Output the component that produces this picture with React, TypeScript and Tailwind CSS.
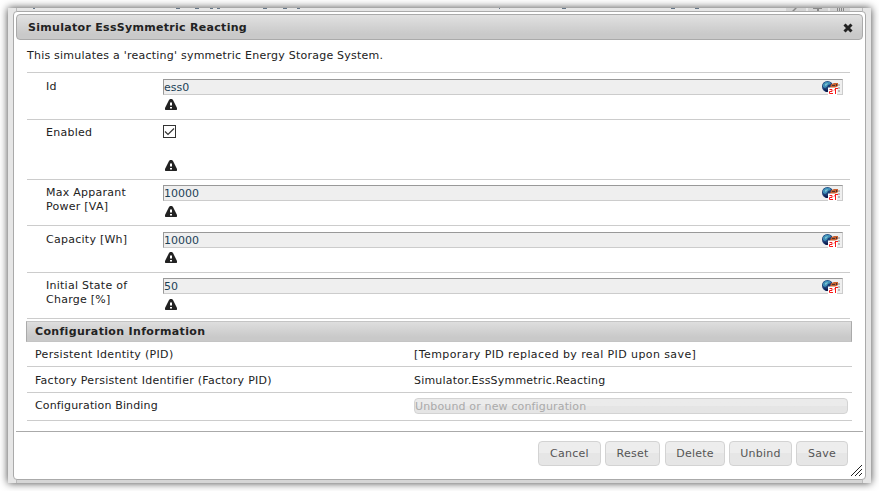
import React from "react";

function Warning() {
  return (
    <svg className="ml-[2px] block shrink-0" width="12" height="11" viewBox="0 0 12 11">
      <path d="M5 0h2l1 1 4 8v1.500l-.5 .5h-11L0 10.500V9l4-8z" fill="#222" />
      <path d="M5 3.500h2v3H5zM5 8h2v1.500H5z" fill="#fff" />
    </svg>
  );
}

function LocaleIcon() {
  return (
    <svg className="block shrink-0" width="19" height="14" viewBox="0 0 19 14">
      <circle cx="5.500" cy="5.500" r="5.500" fill="#1d3e75" />
      <path d="M1 3l3-2.500 4 .5 1 2-3 1-1 2-2 1-2-1z" fill="#3f8fb8" />
      <path d="M3 3l3-1-1 2-2 1z" fill="#7cc2d0" />
      <path d="M2 8l3 1 3-2 2 2-2 2H4z" fill="#101b4d" />
      <path d="M9 3.500l3-1.500h4v3l-3 2H8z" fill="#c8602f" />
      <path d="M10 4h3v1h-3zM14 3h1v2h-1z" fill="#4b3432" />
      <path d="M6 6.500h9v7.500H6z" fill="#fff" />
      <path d="M7.500 8.500h2.500v2h-2.500v2h3.500M12 9.500l1.500-1.500v5M13 7.500h3" fill="none" stroke="#f81818" strokeWidth="1" />
      <path d="M16 3h2v2h-2zM16 6h2v2h-2zM16 9h2v2h-2z" fill="#bbb" />
    </svg>
  );
}

function Field({ value }: { value: string }) {
  return (
    <div className="flex h-[16px] w-[680px] items-start justify-between border border-t-[#999] border-l-[#999] border-r-[#ccc] border-b-[#ccc] bg-[#efefef] pr-px leading-[16px] text-[#1c4257]">
      <span>{value}</span>
      <span className="pt-px"><LocaleIcon /></span>
    </div>
  );
}

function Row({ label, className, labelPad = "pt-[6px]", pad, children }: { label: string; className: string; labelPad?: string; pad: string; children: React.ReactNode }) {
  return (
    <div className={`ml-[13px] flex w-[823px] border-t border-[#ccc] ${className}`}>
      <div className={`w-[120px] shrink-0 pl-[19px] tracking-[0.26px] ${labelPad}`}>{label}</div>
      <div className={`ml-[16px] flex flex-col ${pad}`}>{children}</div>
    </div>
  );
}

function Info({ label, className, children }: { label: string; className: string; children: React.ReactNode }) {
  return (
    <div className={`ml-[13px] flex w-[825px] border-b border-[#ccc] pl-[8px] ${className}`}>
      <div className="w-[379px] shrink-0">{label}</div>
      {children}
    </div>
  );
}

function Button({ label, className }: { label: string; className: string }) {
  return (
    <button className={`h-[25px] rounded-[4px] border border-[#d3d3d3] bg-linear-to-b from-[#ededed] from-50% to-[#e6e6e6] to-50% text-[#555] tracking-[0.25px] ${className}`}>
      {label}
    </button>
  );
}

export default function App() {
  return (
    <div className="h-[491px] w-[879px] overflow-hidden bg-white p-[8px] font-[Verdana,'DejaVu_Sans',sans-serif] text-[11px] leading-[14px] text-[#222]">
      <div className="flex h-[475px] w-[863px] flex-col bg-[#e6e6e6] shadow-[0_0_8px_0_rgba(0,0,0,0.75)]">
        <div className="flex h-[3px] shrink-0 items-start overflow-hidden">
          <svg width="863" height="3" viewBox="0 0 863 3">
            <path d="M8.500 0v3M854.500 0v3" stroke="#bbb" />
            <path d="M25 .5h2M168 .5h4M187 .5h4M202 .5h3M209 .5h3M255 .5h4M275 .5h4M289 .5h3M491 .5h1M554 .5h4M663 .5h4M687 .5h4" stroke="#667788" />
            <path d="M778 0h20v3h-20zM800 0h20v3h-20zM822 0h20v3h-20z" fill="#d3d3d3" />
            <path d="M784 3l3-3h2l-3 3zM805 0h9v1h-3v2h-2V1h-4zM829 0h1v3h-1zM831 0h1v3h-1zM833 0h1v3h-1zM835 0h1v3h-1z" fill="#888" />
          </svg>
        </div>
        <div className="ml-[5px] flex h-[469px] w-[853px] shrink-0 flex-col rounded-[4px] border border-[#aaa] bg-white">
          <div className="ml-[2px] mt-[2px] flex h-[26px] w-[847px] shrink-0 items-center justify-between rounded-[4px] border border-[#aaa] bg-linear-to-b from-[#e1e1e1] to-[#c9c9c9] to-80% pl-[11px] pr-[9px] font-bold tracking-[0.3px]">
            <span className="pt-px">Simulator EssSymmetric Reacting</span>
            <svg className="mt-px" width="10" height="10" viewBox="0 0 10 10">
              <path d="M1.500 1.500l7 7M8.500 1.500l-7 7" stroke="#222" strokeWidth="3" />
            </svg>
          </div>
          <div className="h-[32px] shrink-0 pl-[13px] pt-[9px] tracking-[0.23px]">This simulates a 'reacting' symmetric Energy Storage System.</div>
          <Row label="Id" className="h-[47px]" labelPad="pt-[7px]" pad="gap-[4px] pt-[6px]">
            <Field value="ess0" />
            <Warning />
          </Row>
          <Row label="Enabled" className="h-[60px]" pad="gap-[22px] pt-[5px]">
            <svg className="block" width="13" height="13" viewBox="0 0 13 13">
              <rect x=".5" y=".5" width="12" height="12" fill="#fff" stroke="#333" />
              <path d="M2 6.500L5 9.500L11 3.500" fill="none" stroke="#333" strokeWidth="1.200" />
            </svg>
            <Warning />
          </Row>
          <Row label="Max Apparant Power [VA]" className="h-[46px]" pad="gap-[5px] pt-[5px]">
            <Field value="10000" />
            <Warning />
          </Row>
          <Row label="Capacity [Wh]" className="h-[47px]" labelPad="pt-[7px]" pad="gap-[4px] pt-[6px]">
            <Field value="10000" />
            <Warning />
          </Row>
          <Row label="Initial State of Charge [%]" className="h-[46px]" pad="gap-[5px] pt-[5px]">
            <Field value="50" />
            <Warning />
          </Row>
          <div className="ml-[13px] h-[3px] w-[823px] shrink-0 border-t border-[#ccc]" />
          <div className="ml-[12px] h-[21px] w-[826px] shrink-0 border border-[#c4c4c4] border-l-[#aaa] border-r-[#aaa] bg-linear-to-b from-[#dedede] to-[#c9c9c9] to-80% pl-[8px] pt-[3px] font-bold tracking-[0.34px]">Configuration Information</div>
          <Info label="Persistent Identity (PID)" className="h-[25px] pt-[6px] tracking-[0.32px]">
            <span className="tracking-[0.41px]">[Temporary PID replaced by real PID upon save]</span>
          </Info>
          <Info label="Factory Persistent Identifier (Factory PID)" className="h-[26px] pt-[7px] tracking-[0.27px]">
            <span className="tracking-[0.2px]">Simulator.EssSymmetric.Reacting</span>
          </Info>
          <Info label="Configuration Binding" className="h-[28px] pt-[6px] tracking-[0.15px]">
            <div className="-mt-px h-[16px] w-[434px] rounded-[4px] border border-[#d3d3d3] bg-linear-to-b from-[#ebebeb] from-50% to-[#e5e5e5] to-50% leading-[16px] text-[#aaa]">Unbound or new configuration</div>
          </Info>
          <div className="ml-[2px] mt-[10px] flex h-[47px] w-[847px] shrink-0 items-start border-t border-[#aaa] pl-[522px] pt-[9px]">
            <Button label="Cancel" className="w-[63px]" />
            <Button label="Reset" className="ml-[4px] w-[55px]" />
            <Button label="Delete" className="ml-[5px] w-[60px]" />
            <Button label="Unbind" className="ml-[4px] w-[63px]" />
            <Button label="Save" className="ml-[4px] w-[52px]" />
            <svg className="ml-[3px] mt-[24px] shrink-0" width="11" height="11" viewBox="0 0 11 11">
              <path d="M0 11L11 0M4 11L11 4M8 11l3-3" stroke="#222" strokeWidth="1" />
            </svg>
          </div>
        </div>
        <div className="ml-[8px] h-[3px] w-[847px] border-x border-[#bbb] bg-[#d6d6d6]" />
      </div>
    </div>
  );
}
